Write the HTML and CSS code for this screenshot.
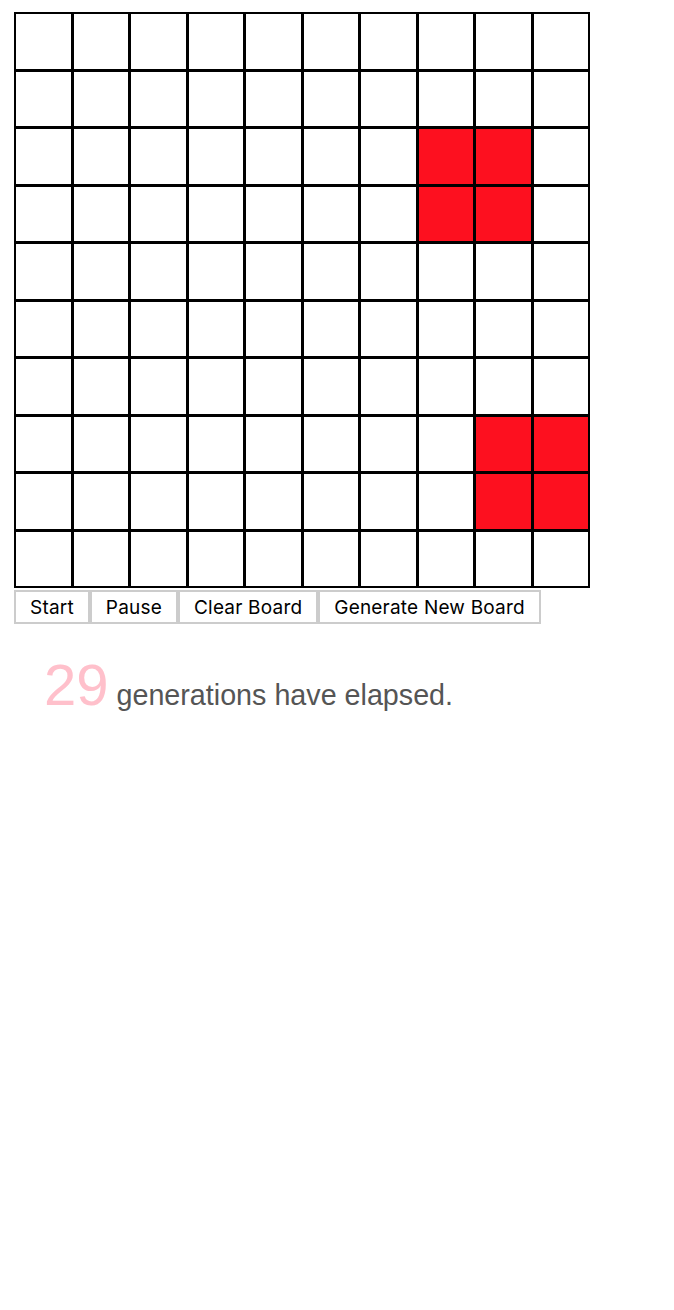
FILE: index.html
```html
<!DOCTYPE html>
<html>
<head>
<meta charset="utf-8">
<link rel="stylesheet" href="styles.css">
</head>
<body>
<div class="app">
  <div class="board">
    <div class="cell"></div><div class="cell"></div><div class="cell"></div><div class="cell"></div><div class="cell"></div><div class="cell"></div><div class="cell"></div><div class="cell"></div><div class="cell"></div><div class="cell"></div>
    <div class="cell"></div><div class="cell"></div><div class="cell"></div><div class="cell"></div><div class="cell"></div><div class="cell"></div><div class="cell"></div><div class="cell"></div><div class="cell"></div><div class="cell"></div>
    <div class="cell"></div><div class="cell"></div><div class="cell"></div><div class="cell"></div><div class="cell"></div><div class="cell"></div><div class="cell"></div><div class="cell alive"></div><div class="cell alive"></div><div class="cell"></div>
    <div class="cell"></div><div class="cell"></div><div class="cell"></div><div class="cell"></div><div class="cell"></div><div class="cell"></div><div class="cell"></div><div class="cell alive"></div><div class="cell alive"></div><div class="cell"></div>
    <div class="cell"></div><div class="cell"></div><div class="cell"></div><div class="cell"></div><div class="cell"></div><div class="cell"></div><div class="cell"></div><div class="cell"></div><div class="cell"></div><div class="cell"></div>
    <div class="cell"></div><div class="cell"></div><div class="cell"></div><div class="cell"></div><div class="cell"></div><div class="cell"></div><div class="cell"></div><div class="cell"></div><div class="cell"></div><div class="cell"></div>
    <div class="cell"></div><div class="cell"></div><div class="cell"></div><div class="cell"></div><div class="cell"></div><div class="cell"></div><div class="cell"></div><div class="cell"></div><div class="cell"></div><div class="cell"></div>
    <div class="cell"></div><div class="cell"></div><div class="cell"></div><div class="cell"></div><div class="cell"></div><div class="cell"></div><div class="cell"></div><div class="cell"></div><div class="cell alive"></div><div class="cell alive"></div>
    <div class="cell"></div><div class="cell"></div><div class="cell"></div><div class="cell"></div><div class="cell"></div><div class="cell"></div><div class="cell"></div><div class="cell"></div><div class="cell alive"></div><div class="cell alive"></div>
    <div class="cell"></div><div class="cell"></div><div class="cell"></div><div class="cell"></div><div class="cell"></div><div class="cell"></div><div class="cell"></div><div class="cell"></div><div class="cell"></div><div class="cell"></div>
  </div>
  <div class="controls">
    <button class="btn">Start</button><button class="btn">Pause</button><button class="btn">Clear Board</button><button class="btn">Generate New Board</button>
  </div>
  <p class="counter"><span class="count">29</span> generations have elapsed.</p>
</div>
</body>
</html>
```

FILE: styles.css
```css
html, body {
  margin: 0;
  padding: 0;
  background: #ffffff;
}

.app {
  padding: 12px 0 0 14px;
}

.board {
  box-sizing: border-box;
  width: 576px;
  height: 576px;
  padding: 2px;
  background: #000000;
  display: grid;
  grid-template-columns: repeat(5, 55px 54px);
  grid-template-rows: repeat(5, 55px 54px);
  gap: 3px;
}

.cell {
  background: #ffffff;
}

.cell.alive {
  background: #fd101f;
}

.controls {
  display: flex;
  margin-top: 2px;
}

.btn {
  box-sizing: border-box;
  height: 34px;
  margin: 0;
  padding: 0 14px;
  border: 2px solid #cccccc;
  background: #ffffff;
  color: #000000;
  font-family: Inter, "Liberation Sans", sans-serif;
  font-size: 19px;
  letter-spacing: 0.2px;
  line-height: 1;
}

.counter {
  margin: 32px 0 0 30px;
  font-family: "Liberation Sans", Arial, sans-serif;
  color: #555555;
  font-size: 28.7px;
}

.count {
  color: #ffc0cb;
  font-size: 58px;
  line-height: 1;
}
```
